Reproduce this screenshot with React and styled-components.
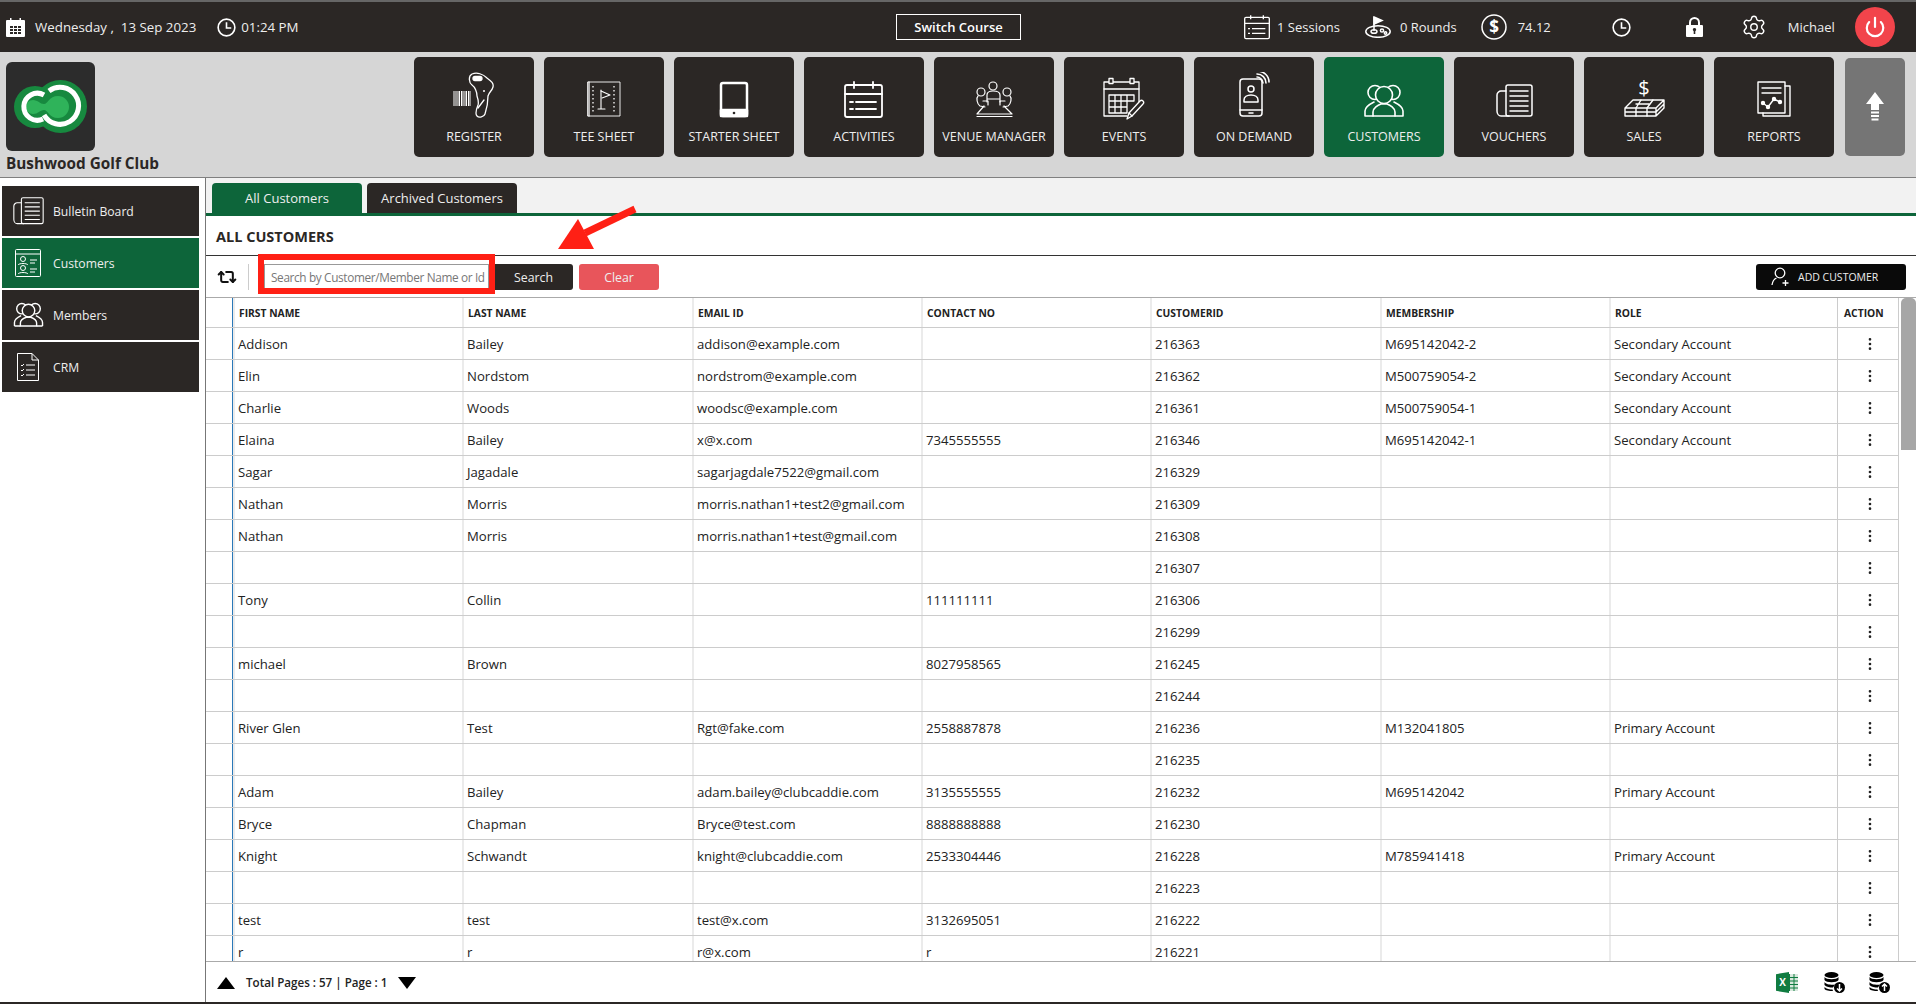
import React from 'react';
import styled, { createGlobalStyle } from 'styled-components';
import { Repeat2, Settings, Power, MoreVertical } from 'lucide-react';

const GlobalStyle = createGlobalStyle`
  html, body { margin: 0; padding: 0; height: 100%; overflow: hidden; background: #fff; }
  body { font-family: "Open Sans", "Noto Sans", sans-serif; color: #222; }
  * { box-sizing: border-box; }
`;

const Page = styled.div`
  width: 1916px;
  height: 1004px;
  display: flex;
  flex-direction: column;
  overflow: hidden;
  border-bottom: 2px solid #2b2725;
`;

const TopBar = styled.header`
  height: 52px;
  flex: none;
  display: flex;
  align-items: center;
  background: #2b2725;
  border-top: 2px solid #666;
  color: #eee;
  font-size: 13.3px;
`;

const TopLeft = styled.div`
  width: 896px;
  display: flex;
  align-items: center;
  padding-left: 6px;
`;

const TopRight = styled.div`
  flex: 1;
  display: flex;
  align-items: center;
  padding-left: 223px;
  font-size: 13px;
`;

const TopItem = styled.div`
  display: flex;
  align-items: center;
  margin-left: ${p => p.$ml || 0}px;
  gap: ${p => p.$gap || 0}px;
  white-space: nowrap;
`;

const SwitchButton = styled.button`
  width: 125px;
  height: 26px;
  padding: 0;
  background: transparent;
  border: 1px solid #fff;
  color: #fff;
  font: 600 13px "Open Sans", sans-serif;
`;

const PowerButton = styled.button`
  width: 40px;
  height: 40px;
  margin-left: 20px;
  padding: 0;
  border: none;
  border-radius: 50%;
  background: #f2444b;
  color: #fff;
  display: flex;
  align-items: center;
  justify-content: center;
`;

const HeaderBand = styled.div`
  height: 126px;
  flex: none;
  display: flex;
  background: #d6d6d6;
  border-bottom: 1px solid #808080;
`;

const Brand = styled.div`
  width: 414px;
  flex: none;
  padding: 10px 0 0 6px;
`;

const LogoBox = styled.div`
  width: 89px;
  height: 89px;
  border-radius: 6px;
  background: #2c2c2c;
`;

const BrandName = styled.div`
  margin-top: 2px;
  font-size: 15.3px;
  line-height: 20px;
  font-weight: 700;
  color: #2b2725;
`;

const NavRow = styled.nav`
  display: flex;
  gap: 10px;
  padding-top: 5px;
`;

const Tile = styled.div`
  width: 120px;
  height: 100px;
  padding-top: 15px;
  border-radius: 5px;
  background: ${p => (p.$active ? '#0d653a' : '#2b2725')};
  color: #fff;
  display: flex;
  flex-direction: column;
  align-items: center;
`;

const TileLabel = styled.div`
  margin-top: 8px;
  font-size: 12.5px;
  line-height: 18px;
  color: #eee;
  white-space: nowrap;
`;

const UpTile = styled.div`
  width: 60px;
  height: 98px;
  margin: 6px 0 0 11px;
  border-radius: 5px;
  background: #757575;
  display: flex;
  align-items: center;
  justify-content: center;
`;

const Main = styled.div`
  flex: 1;
  min-height: 0;
  display: flex;
`;

const Sidebar = styled.aside`
  width: 206px;
  flex: none;
  padding: 8px 6px 0 2px;
  display: flex;
  flex-direction: column;
  gap: 2px;
  background: #fff;
  border-right: 1px solid #777;
`;

const SideItem = styled.div`
  height: 50px;
  display: flex;
  align-items: center;
  background: ${p => (p.$active ? '#0d653a' : '#2b2725')};
  color: #eee;
  font-size: 12.2px;
`;

const SideIcon = styled.span`
  width: 51px;
  flex: none;
  display: flex;
  justify-content: center;
  padding-left: 1px;
  color: #fff;
`;

const Content = styled.section`
  flex: 1;
  min-width: 0;
  display: flex;
  flex-direction: column;
  position: relative;
`;

const TabRow = styled.div`
  height: 38px;
  flex: none;
  display: flex;
  gap: 5px;
  padding: 5px 0 0 6px;
  background: #f2f2f2;
  border-bottom: 3px solid #0d653a;
`;

const Tab = styled.div`
  width: 150px;
  height: 30px;
  border-radius: 4px 4px 0 0;
  background: ${p => (p.$active ? '#0d653a' : '#2b2725')};
  color: #eee;
  font-size: 13px;
  line-height: 30px;
  text-align: center;
`;

const TitleRow = styled.div`
  height: 40px;
  flex: none;
  padding: 2px 0 0 10px;
  display: flex;
  align-items: center;
  border-bottom: 1px solid #333;
  font-size: 14.5px;
  font-weight: 700;
  color: #2b2725;
`;

const Toolbar = styled.div`
  height: 42px;
  flex: none;
  display: flex;
  align-items: flex-start;
  padding: 8px 10px 0 11px;
  border-bottom: 1px solid #aaa;
`;

const RefreshBtn = styled.span`
  width: 20px;
  height: 26px;
  display: flex;
  align-items: center;
  justify-content: center;
  color: #111;
`;

const ToolSep = styled.span`
  width: 1px;
  height: 26px;
  margin: 0 15px 0 11px;
  background: #ccc;
`;

const SearchBox = styled.div`
  position: relative;
  width: 225px;
  height: 26px;
`;

const SearchInput = styled.input`
  width: 100%;
  height: 100%;
  padding: 0 0 0 6px;
  border: 1px solid #999;
  background: #fff;
  font: 11.8px "Open Sans", sans-serif;
  letter-spacing: -0.35px;
  &::placeholder { color: #777; opacity: 1; }
`;

const RedFrame = styled.span`
  position: absolute;
  left: -6px;
  right: -6px;
  top: -10px;
  bottom: -4px;
  border: 6px solid #ff2015;
  pointer-events: none;
`;

const ActionBtn = styled.button`
  height: 26px;
  padding: 0 0 0 ${p => p.$pl || 0}px;
  border: none;
  border-radius: 3px;
  width: ${p => p.$w}px;
  margin-left: ${p => p.$ml || 0}px;
  background: ${p => p.$bg};
  color: #eee;
  font: 12.3px "Open Sans", sans-serif;
`;

const AddBtn = styled.button`
  width: 150px;
  height: 26px;
  margin-left: auto;
  padding: 0 0 0 15px;
  border: none;
  border-radius: 3px;
  background: #0a0a0a;
  color: #eee;
  display: flex;
  align-items: center;
  gap: 7px;
  font: 10.5px "Open Sans", sans-serif;
`;

const ArrowMark = styled.svg`
  position: absolute;
  left: 344px;
  top: 27px;
`;

const TableArea = styled.div`
  flex: 1;
  min-height: 0;
  display: flex;
  overflow: hidden;
`;

const Table = styled.div`
  width: 1693px;
  flex: none;
`;

const Row = styled.div`
  display: grid;
  grid-template-columns: 27px 229px 230px 229px 229px 230px 229px 228px 62px;
  height: ${p => (p.$head ? 30 : 32)}px;
  align-items: stretch;
  border-bottom: 1px solid #ccc;
  border-right: 1px solid #ccc;
`;

const Gutter = styled.div`
  border-right: 1px solid #2a78b8;
`;

const Cell = styled.div`
  display: flex;
  align-items: center;
  padding-left: ${p => (p.$head ? 4 : 3)}px;
  border-left: 2px solid #ebebeb;
  font-size: ${p => (p.$head ? 10.3 : 13.15)}px;
  font-weight: ${p => (p.$head ? 700 : 400)};
  color: #222;
  white-space: nowrap;
`;

const ActionCell = styled.div`
  display: flex;
  align-items: center;
  justify-content: ${p => (p.$head ? 'flex-start' : 'center')};
  padding-left: ${p => (p.$head ? 6 : 2)}px;
  border-left: 1px solid #ccc;
  font-size: 10.3px;
  font-weight: 700;
  color: #222;
`;

const ScrollTrack = styled.div`
  flex: 1;
  padding-left: 2px;
`;

const ScrollThumb = styled.div`
  height: 152px;
  border-radius: 5px 5px 0 0;
  background: #a6a6a6;
`;

const Footer = styled.footer`
  height: 41px;
  flex: none;
  display: flex;
  align-items: center;
  padding: 1px 26px 0 11px;
  border-top: 1px solid #aaa;
  background: #fff;
`;

const PageText = styled.span`
  margin: 0 11px;
  font-size: 11.6px;
  font-weight: 600;
  color: #222;
`;

const FootIcons = styled.div`
  margin-left: auto;
  display: flex;
  align-items: center;
  gap: 24px;
  svg:first-child { margin-right: 2px; }
`;

const Clock = ({ size }) => (
  <svg width={size} height={size} viewBox="0 0 20 20" fill="none" stroke="#fff" strokeWidth="1.7">
    <circle cx="10" cy="10" r="8.8" />
    <path d="M10 4.5V10.5H15" />
  </svg>
);

const DayCalendar = () => (
  <svg width="19" height="20" viewBox="0 0 19 20">
    <path fill="#fff" d="M1 3h3V1h1.5v2h8V1H15v2h3a1 1 0 0 1 1 1v15a1 1 0 0 1-1 1H1a1 1 0 0 1-1-1V4a1 1 0 0 1 1-1z" />
    <path fill="#2b2725" d="M4 9h3v2H4zM8 9h3v2H8zM12 9h3v2h-3zM4 12h3v2H4zM8 12h3v2H8zM12 12h3v2h-3zM4 15h3v2H4zM8 15h3v2H8zM12 15h3v2h-3z" />
  </svg>
);

const ListCalendar = ({ width, height, sw = 2 }) => (
  <svg width={width} height={height} viewBox="15 9 39 37" fill="none" stroke="#fff" strokeWidth={sw} strokeLinejoin="round">
    <rect x="16" y="13" width="37" height="32" rx="2" />
    <path d="M16 22H53M25 10V16M44 10V16M27 30H47M27 37H47M21 30H24M21 37H24" />
  </svg>
);

const GolfHole = () => (
  <svg width="26" height="22" viewBox="0 0 26 22" fill="none" stroke="#fff" strokeWidth="1.5">
    <ellipse cx="13" cy="15.5" rx="12.2" ry="5.8" />
    <path d="M9 15V1" />
    <path d="M9 1L17 4.5L9 8Z" fill="#fff" />
    <ellipse cx="9" cy="15.5" rx="3" ry="1.8" />
    <circle cx="17" cy="14.5" r="1.6" />
    <circle cx="20.5" cy="17" r="1.2" />
  </svg>
);

const DollarCircle = () => (
  <svg width="26" height="26" viewBox="0 0 26 26" fill="none" stroke="#fff" strokeWidth="1.5">
    <circle cx="13" cy="13" r="12" />
    <text x="13" y="19" textAnchor="middle" fill="#fff" stroke="none" fontSize="17" fontWeight="700" fontFamily="Open Sans">$</text>
  </svg>
);

const Padlock = () => (
  <svg width="17" height="20" viewBox="0 0 17 20">
    <path fill="none" stroke="#fff" strokeWidth="2" d="M4 9V5.5a4.5 4.5 0 0 1 9 0V9" />
    <path fill="#fff" fillRule="evenodd" d="M1 8h15a1 1 0 0 1 1 1v10a1 1 0 0 1-1 1H1a1 1 0 0 1-1-1V9a1 1 0 0 1 1-1zM8.500 11a1.700 1.700 0 0 0-.8 3.200V17h1.600v-2.800A1.700 1.700 0 0 0 8.500 11z" />
  </svg>
);

const Logo = () => (
  <svg width="89" height="89" viewBox="0 0 89 89" fill="none">
    <circle cx="29" cy="45" r="21" fill="#17893f" />
    <circle cx="54.500" cy="44.500" r="26.500" fill="#17893f" />
    <path d="M20 45a7 7 0 0 1 7-7c5 0 7 4 11 4s5-8 14-8a11 11 0 0 1 0 22c-9 0-10-8-14-8s-6 4-11 4a7 7 0 0 1-7-7z" fill="#2fb35a" />
    <path d="M38 33A13.500 13.500 0 1 0 37 57" stroke="#fff" strokeWidth="5" />
    <path d="M43 29A18.500 18.500 0 1 1 38 53" stroke="#fff" strokeWidth="5" />
  </svg>
);

const Glyph = ({ children, sw = 1.5 }) => (
  <svg width="70" height="48" viewBox="0 0 70 48" fill="none" stroke="#fff" strokeWidth={sw} strokeLinejoin="round" strokeLinecap="round">
    {children}
  </svg>
);

const RegisterIcon = () => (
  <Glyph sw={1.3}>
    <path d="M33 2C38 0 44 2 48 6C52 9 55 11 54 15C53 19 50 20 49 24C49 30 48 36 46 42C45 45 40 46 38 44C36 42 37 38 39 33C40 30 39 27 38 24C38 20 36 15 33 13C30 11 29 4 33 2Z" />
    <rect x="34" y="4.500" width="9" height="4" rx="2" fill="#fff" />
    <path d="M45 28L39 36" />
    <circle cx="45" cy="19" r="1" fill="#fff" stroke="none" />
    <path strokeWidth="1" strokeLinecap="butt" d="M15 19V34M17 19V34M19 19V34M20.500 19V34M22.500 19V34M24 19V34M26 19V34M27.500 19V34M29.500 19V34M31 19V34" />
  </Glyph>
);

const TeeIcon = () => (
  <Glyph sw={1.1}>
    <rect x="19" y="10" width="32" height="34" strokeWidth="0.9" />
    <path d="M20 10V44" strokeWidth="1.300" />
    <path strokeDasharray="1.500 2.500" strokeLinecap="butt" strokeWidth="1.300" d="M24 14V41M45 14V41" />
    <path d="M32 18V37M29 37H36" />
    <path d="M32 19L41 23L33 26" />
  </Glyph>
);

const TabletIcon = () => (
  <Glyph sw={2.500}>
    <rect x="22" y="11" width="26" height="33" rx="2" />
    <path d="M22 38H48V44H22Z" fill="#fff" stroke="#fff" />
    <circle cx="35" cy="41" r="1.300" fill="#2b2725" stroke="none" />
  </Glyph>
);

const ActivitiesIcon = () => (
  <Glyph sw={1.800}>
    <rect x="16" y="13" width="37" height="32" rx="2" />
    <path d="M16 22H53M25 10V16M44 10V16M27 30H47M27 37H47M21 30H24M21 37H24" />
  </Glyph>
);

const VenueIcon = () => (
  <Glyph sw={1.200}>
    <circle cx="22" cy="20" r="4" />
    <circle cx="34" cy="14" r="4" />
    <circle cx="48" cy="20" r="4" />
    <path d="M28 30V23C28 20 30 19 34 19C38 19 41 20 41 23V30M28 27H41" />
    <path d="M19 24C17 26 18 32 21 34L26 35M51 24C53 26 52 32 49 34L44 35" />
    <path d="M24 29H29V33M46 29H41V33" />
    <path d="M25 34L18 42H53L45 34M18 44.500H53" />
  </Glyph>
);

const EventsIcon = () => (
  <Glyph sw={1.300}>
    <path d="M38 44H15V10H50V32" />
    <path d="M15 17H50" />
    <rect x="20" y="6.500" width="4" height="5" fill="#2b2725" />
    <rect x="41" y="6.500" width="4" height="5" fill="#2b2725" />
    <path d="M20 23H45V29H38V41H20ZM20 29H38M20 35H38M26 23V41M32 23V41M38 23V29" />
    <path d="M38 47L40 41L51 29C53 27 56 30 54 32L43 44Z" fill="#2b2725" />
    <path d="M40 41L43 44" />
  </Glyph>
);

const DemandIcon = () => (
  <Glyph sw={1.500}>
    <rect x="21" y="7" width="22" height="37" rx="3" />
    <path d="M21 38H43M30 41H34" />
    <circle cx="32" cy="17" r="3" />
    <path d="M25 30V28C25 25 28 23 32 23C36 23 39 25 39 28V30Z" />
    <path d="M38 2C43 2 47 6 47 11M38 -1C45 -1 50 4 50 10" strokeWidth="1.600" />
    <path d="M38 5C40 5 44 7 44 11" strokeWidth="1.600" />
  </Glyph>
);

const People = ({ bg, sw = 1.600 }) => (
  <g strokeWidth={sw}>
    <circle cx="26" cy="20.500" r="7" />
    <circle cx="44" cy="20.500" r="7" />
    <path d="M16 44V39C16 35 21 32 25 30M54 44V39C54 35 49 32 45 30M16 44H24M46 44H54" />
    <circle cx="35" cy="23" r="8.500" fill={bg} />
    <path d="M24 44V40C24 36 29 33 32 32H38C41 33 46 36 46 40V44Z" fill={bg} />
  </g>
);

const CustomersIcon = () => (
  <Glyph><People bg="#0d653a" /></Glyph>
);

const Newspaper = () => (
  <g>
    <rect x="27" y="13" width="26" height="31" rx="2" />
    <path d="M27 19H22C20 19 18 21 18 23V39C18 42 20 44 22 44H30" />
    <path d="M31 19H49M31 24H49M31 29H49M31 34H49M31 39H49" />
  </g>
);

const VouchersIcon = () => (
  <Glyph><Newspaper /></Glyph>
);

const SalesIcon = () => (
  <Glyph sw={1.400}>
    <text x="35" y="23" textAnchor="middle" fontSize="20" fill="#fff" stroke="none" fontFamily="Open Sans">$</text>
    <path d="M24 28H55L47 36H16ZM16 36V44H47V36M47 40H16M47 44L55 36V28M47 40L55 32" />
    <path d="M32 28L27 36V44M44 28L38 36V44M27 32H40" />
  </Glyph>
);

const ReportsIcon = () => (
  <Glyph sw={1.400}>
    <rect x="19" y="10" width="27" height="31" />
    <path d="M46 14H51V44H24V41" />
    <path d="M23 16H42M23 21H42" />
    <path d="M24 31L29 35L35 27L41 30" />
    <circle cx="24" cy="31" r="1.500" fill="#fff" />
    <circle cx="29" cy="35" r="1.500" fill="#fff" />
    <circle cx="35" cy="27" r="1.500" fill="#fff" />
    <circle cx="41" cy="30" r="1.500" fill="#fff" />
  </Glyph>
);

const UpArrow = () => (
  <svg width="20" height="30" viewBox="0 0 20 30" fill="#fff">
    <path d="M10 0L19 12H14V18H6V12H1Z" />
    <path d="M6 19.500H14V21.500H6ZM6 23H14V25H6ZM6.500 26.500H13.500V28.500H6.500Z" />
  </svg>
);

const BulletinIcon = () => (
  <svg width="31" height="29" viewBox="17 14 37 31" fill="none" stroke="#fff" strokeWidth="1.300">
    <Newspaper />
  </svg>
);

const CardIcon = () => (
  <svg width="26" height="28" viewBox="0 0 26 28" fill="none" stroke="#fff" strokeWidth="1">
    <rect x="0.500" y="0.500" width="25" height="27" rx="1" />
    <path d="M0.500 5H25.500M15 11H22M15 14H20M15 20H22M15 23H20" />
    <circle cx="8" cy="10" r="2.500" />
    <circle cx="8" cy="19" r="2.500" />
    <path d="M3 16C4 14 12 14 13 16M3 25C4 23 12 23 13 25" />
  </svg>
);

const MembersIcon = () => (
  <svg width="31" height="26" viewBox="14 12 42 34" fill="none" stroke="#fff">
    <People bg="#2b2725" sw={1.900} />
  </svg>
);

const CrmIcon = () => (
  <svg width="22" height="28" viewBox="0 0 22 28" fill="none" stroke="#fff" strokeWidth="1">
    <path d="M0.500 0.500H15L21.500 7V27.500H0.500Z" />
    <path d="M15 0.500V7H21.500" />
    <path d="M9 12H18M9 17H18M9 22H18M4 12L5 13L7 11M4 17L5 18L7 16M4 22L5 23L7 21" />
  </svg>
);

const AddUser = () => (
  <svg width="20" height="20" viewBox="0 0 20 20" fill="none" stroke="#fff" strokeWidth="1.300">
    <circle cx="9" cy="6" r="4.800" />
    <path d="M1 18C1.500 14.500 3 12 5.500 11" />
    <path d="M14.500 13V19M11.500 16H17.500" />
  </svg>
);

const Triangle = ({ down }) => (
  <svg width="18" height="12" viewBox="0 0 18 12" fill="#000">
    <path d={down ? 'M0 0H18L9 12Z' : 'M0 12H18L9 0Z'} />
  </svg>
);

const ExcelIcon = () => (
  <svg width="22" height="21" viewBox="0 0 22 21">
    <rect x="9" y="2" width="13" height="17" fill="#d8e8dd" />
    <path stroke="#107c41" strokeWidth="1" d="M9 5.500H22M9 9H22M9 12.500H22M9 16H22M13.500 2V19M18 2V19" />
    <path fill="#107c41" d="M0 2.200L13 0V21L0 18.800Z" />
    <text x="6.500" y="14" textAnchor="middle" fontSize="10" fontWeight="700" fill="#fff" fontFamily="Open Sans">X</text>
  </svg>
);

const DbIcon = ({ up }) => (
  <svg width="21" height="21" viewBox="0 0 21 21">
    <ellipse cx="7.500" cy="3" rx="7" ry="3" fill="#000" />
    <path fill="#000" d="M0.500 5C2 8 13 8 14.500 5V8C13 11 2 11 0.500 8ZM0.500 10C2 13 9 13 11 12.500L9 15.500C6 15.500 2 15 0.500 13ZM0.500 15C2 17 6 17.500 8.500 17.500L9 19C5 19 1.500 18.500 0.500 17Z" />
    <circle cx="15.500" cy="15.500" r="5.500" fill="#000" />
    <path fill="none" stroke="#fff" strokeWidth="1.500" d={up ? 'M15.500 19V12.500M13 14.500L15.500 12L18 14.500' : 'M15.500 12V18.500M13 16.500L15.500 19L18 16.500'} />
  </svg>
);

const tiles = [
  { label: 'REGISTER', Icon: RegisterIcon },
  { label: 'TEE SHEET', Icon: TeeIcon },
  { label: 'STARTER SHEET', Icon: TabletIcon },
  { label: 'ACTIVITIES', Icon: ActivitiesIcon },
  { label: 'VENUE MANAGER', Icon: VenueIcon },
  { label: 'EVENTS', Icon: EventsIcon },
  { label: 'ON DEMAND', Icon: DemandIcon },
  { label: 'CUSTOMERS', Icon: CustomersIcon, active: true },
  { label: 'VOUCHERS', Icon: VouchersIcon },
  { label: 'SALES', Icon: SalesIcon },
  { label: 'REPORTS', Icon: ReportsIcon },
];

const sideItems = [
  { label: 'Bulletin Board', Icon: BulletinIcon },
  { label: 'Customers', Icon: CardIcon, active: true },
  { label: 'Members', Icon: MembersIcon },
  { label: 'CRM', Icon: CrmIcon },
];

const columns = ['FIRST NAME', 'LAST NAME', 'EMAIL ID', 'CONTACT NO', 'CUSTOMERID', 'MEMBERSHIP', 'ROLE'];

const rows = [
  ['Addison', 'Bailey', 'addison@example.com', '', '216363', 'M695142042-2', 'Secondary Account'],
  ['Elin', 'Nordstom', 'nordstrom@example.com', '', '216362', 'M500759054-2', 'Secondary Account'],
  ['Charlie', 'Woods', 'woodsc@example.com', '', '216361', 'M500759054-1', 'Secondary Account'],
  ['Elaina', 'Bailey', 'x@x.com', '7345555555', '216346', 'M695142042-1', 'Secondary Account'],
  ['Sagar', 'Jagadale', 'sagarjagdale7522@gmail.com', '', '216329', '', ''],
  ['Nathan', 'Morris', 'morris.nathan1+test2@gmail.com', '', '216309', '', ''],
  ['Nathan', 'Morris', 'morris.nathan1+test@gmail.com', '', '216308', '', ''],
  ['', '', '', '', '216307', '', ''],
  ['Tony', 'Collin', '', '111111111', '216306', '', ''],
  ['', '', '', '', '216299', '', ''],
  ['michael', 'Brown', '', '8027958565', '216245', '', ''],
  ['', '', '', '', '216244', '', ''],
  ['River Glen', 'Test', 'Rgt@fake.com', '2558887878', '216236', 'M132041805', 'Primary Account'],
  ['', '', '', '', '216235', '', ''],
  ['Adam', 'Bailey', 'adam.bailey@clubcaddie.com', '3135555555', '216232', 'M695142042', 'Primary Account'],
  ['Bryce', 'Chapman', 'Bryce@test.com', '8888888888', '216230', '', ''],
  ['Knight', 'Schwandt', 'knight@clubcaddie.com', '2533304446', '216228', 'M785941418', 'Primary Account'],
  ['', '', '', '', '216223', '', ''],
  ['test', 'test', 'test@x.com', '3132695051', '216222', '', ''],
  ['r', 'r', 'r@x.com', 'r', '216221', '', ''],
];

export default function App() {
  return (
    <Page>
      <GlobalStyle />
      <TopBar>
        <TopLeft>
          <DayCalendar />
          <TopItem $ml={10}>Wednesday ,&nbsp; 13 Sep 2023</TopItem>
          <TopItem $ml={21} $gap={5}><Clock size={19} />01:24 PM</TopItem>
        </TopLeft>
        <SwitchButton>Switch Course</SwitchButton>
        <TopRight>
          <TopItem $gap={7}><ListCalendar width={26} height={26} />1 Sessions</TopItem>
          <TopItem $ml={25} $gap={9}><GolfHole />0 Rounds</TopItem>
          <TopItem $ml={24} $gap={11}><DollarCircle />74.12</TopItem>
          <TopItem $ml={61}><Clock size={19} /></TopItem>
          <TopItem $ml={55}><Padlock /></TopItem>
          <TopItem $ml={38}><Settings size={26} strokeWidth={1.3} color="#fff" /></TopItem>
          <TopItem $ml={21}>Michael</TopItem>
          <PowerButton><Power size={22} strokeWidth={2.4} /></PowerButton>
        </TopRight>
      </TopBar>
      <HeaderBand>
        <Brand>
          <LogoBox><Logo /></LogoBox>
          <BrandName>Bushwood Golf Club</BrandName>
        </Brand>
        <NavRow>
          {tiles.map(({ label, Icon, active }) => (
            <Tile key={label} $active={active}>
              <Icon />
              <TileLabel>{label}</TileLabel>
            </Tile>
          ))}
        </NavRow>
        <UpTile><UpArrow /></UpTile>
      </HeaderBand>
      <Main>
        <Sidebar>
          {sideItems.map(({ label, Icon, active }) => (
            <SideItem key={label} $active={active}>
              <SideIcon><Icon /></SideIcon>
              {label}
            </SideItem>
          ))}
        </Sidebar>
        <Content>
          <TabRow>
            <Tab $active>All Customers</Tab>
            <Tab>Archived Customers</Tab>
          </TabRow>
          <TitleRow>ALL CUSTOMERS</TitleRow>
          <Toolbar>
            <RefreshBtn><Repeat2 size={20} strokeWidth={2.4} /></RefreshBtn>
            <ToolSep />
            <SearchBox>
              <SearchInput placeholder="Search by Customer/Member Name or Id" readOnly />
              <RedFrame />
            </SearchBox>
            <ActionBtn $w={84} $pl={5} $bg="#2b2725">Search</ActionBtn>
            <ActionBtn $w={80} $ml={6} $bg="#e8555b">Clear</ActionBtn>
            <AddBtn><AddUser />ADD CUSTOMER</AddBtn>
          </Toolbar>
          <TableArea>
            <Table>
              <Row $head>
                <Gutter />
                {columns.map(c => <Cell key={c} $head>{c}</Cell>)}
                <ActionCell $head>ACTION</ActionCell>
              </Row>
              {rows.map((r, i) => (
                <Row key={i}>
                  <Gutter />
                  {r.map((v, j) => <Cell key={j}>{v}</Cell>)}
                  <ActionCell><MoreVertical size={16} strokeWidth={2} color="#222" /></ActionCell>
                </Row>
              ))}
            </Table>
            <ScrollTrack><ScrollThumb /></ScrollTrack>
          </TableArea>
          <Footer>
            <Triangle />
            <PageText>Total Pages : 57 | Page : 1</PageText>
            <Triangle down />
            <FootIcons>
              <ExcelIcon />
              <DbIcon />
              <DbIcon up />
            </FootIcons>
          </Footer>
          <ArrowMark width="90" height="46" viewBox="0 0 90 46" fill="#ff2015">
            <path d="M28 14L8 44H44Z" />
            <path d="M35 28L85 4" stroke="#ff2015" strokeWidth="7" />
          </ArrowMark>
        </Content>
      </Main>
    </Page>
  );
}
